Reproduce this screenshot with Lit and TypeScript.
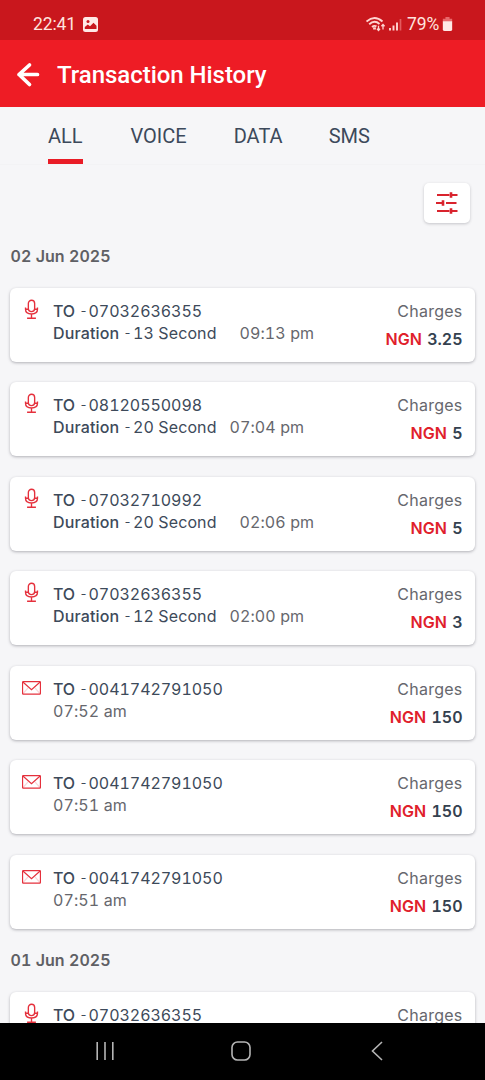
import { LitElement, html, css, svg } from "lit";
import { customElement, property } from "lit/decorators.js";

interface Entry {
  kind: "voice" | "sms";
  to: string;
  duration?: string;
  time: string;
  amount: string;
  wide?: boolean;
}

const days: { date: string; entries: Entry[] }[] = [
  {
    date: "02 Jun 2025",
    entries: [
      { kind: "voice", to: "07032636355", duration: "13 Second", time: "09:13 pm", amount: "3.25", wide: true },
      { kind: "voice", to: "08120550098", duration: "20 Second", time: "07:04 pm", amount: "5" },
      { kind: "voice", to: "07032710992", duration: "20 Second", time: "02:06 pm", amount: "5", wide: true },
      { kind: "voice", to: "07032636355", duration: "12 Second", time: "02:00 pm", amount: "3" },
      { kind: "sms", to: "0041742791050", time: "07:52 am", amount: "150" },
      { kind: "sms", to: "0041742791050", time: "07:51 am", amount: "150" },
      { kind: "sms", to: "0041742791050", time: "07:51 am", amount: "150" },
    ],
  },
  {
    date: "01 Jun 2025",
    entries: [{ kind: "voice", to: "07032636355", time: "", amount: "" }],
  },
];

const mic = svg`<rect x="7" y="1.200" width="6" height="10.800" rx="3"/><path d="M4.300 8v1.800c0 2.800 2.400 4.500 5.700 4.500s5.700-1.700 5.700-4.500V8M10 14.300v4M5.800 18.300h8.400M4.300 9.800H7M13 9.800h2.700"/>`;
const mail = svg`<rect x="1.500" y="3.500" width="17" height="11.800" rx=".6"/><path d="M1.800 3.800 10 11.200l8.200-7.400"/><path d="M1.800 15 6.700 9.500M18.200 15l-4.900-5.500" stroke-opacity=".2"/>`;

@customElement("transaction-card")
class TransactionCard extends LitElement {
  @property({ attribute: false }) entry!: Entry;

  static styles = css`
    :host { display: block; }
    .card {
      box-sizing: border-box; height: 74px; display: flex; background: #fff; border-radius: 6px;
      padding: 12px 12.5px 0 11px; box-shadow: 0 1px 3px rgba(40, 40, 55, 0.34);
      font: 16px/22px Inter, sans-serif; font-variant-numeric: tabular-nums; color: #3d4a5a; white-space: nowrap;
    }
    .icon { width: 21px; height: 21px; flex: none; fill: none; stroke: #e5303c; stroke-width: 1.3; }
    .voice { margin-top: -1px; }
    .sms { stroke-width: 1.1; }
    .info { margin-left: 11px; flex: 1; }
    .line { display: flex; height: 22px; }
    .to { width: 26.5px; font-weight: 500; letter-spacing: -0.1px; }
    .dash { width: 9px; font-size: 12.5px; }
    .number { letter-spacing: -0.05px; }
    .label { width: 70.5px; font-weight: 500; letter-spacing: 0.15px; }
    .dash.second { width: 9.5px; }
    .seconds { width: 96.5px; letter-spacing: 0.1px; }
    .seconds.wide { width: 106.5px; }
    .time { color: #66676d; letter-spacing: 0.1px; }
    .side { text-align: right; color: #66676d; }
    .charges { letter-spacing: 0.25px; }
    .amount { margin-top: 6px; font-weight: 600; color: #34414f; word-spacing: 1px; }
    .currency { color: #e0202b; }
  `;

  render() {
    const e = this.entry;
    return html`<div class="card">
      <svg class="icon ${e.kind}" viewBox="0 0 20 20">${e.kind === "voice" ? mic : mail}</svg>
      <div class="info">
        <div class="line"><span class="to">TO</span><span class="dash">-</span><span class="number">${e.to}</span></div>
        ${e.time
          ? html`<div class="line">
              ${e.duration
                ? html`<span class="label">Duration</span><span class="dash second">-</span><span class="seconds ${e.wide ? "wide" : ""}">${e.duration}</span>`
                : ""}
              <span class="time">${e.time}</span>
            </div>`
          : ""}
      </div>
      <div class="side">
        <div class="charges">Charges</div>
        ${e.amount ? html`<div class="amount"><span class="currency">NGN</span> ${e.amount}</div>` : ""}
      </div>
    </div>`;
  }
}

@customElement("app-root")
class AppRoot extends LitElement {
  static styles = css`
    :host {
      display: flex; flex-direction: column; height: 1080px; width: 485px; overflow: hidden;
      background: #f6f6f8; font-family: Roboto, sans-serif;
    }
    .status {
      box-sizing: border-box; height: 40px; flex: none; padding: 8px 32px 0 33px; display: flex; align-items: center;
      background: #c9171d; color: #ffe3df; font-size: 17.5px;
    }
    .clock { width: 50px; letter-spacing: -0.1px; }
    .picture { width: 15px; height: 15px; }
    .signals { margin-left: auto; width: 38px; height: 18px; }
    .percent { margin-left: 3px; width: 35px; letter-spacing: -0.1px; }
    .battery { width: 11px; height: 14px; }
    .header {
      box-sizing: border-box; height: 67px; flex: none; display: flex; align-items: center; padding: 2px 0 0 16px;
      background: #ee1c25; color: #fff;
    }
    .back { width: 24px; height: 26px; }
    .title { margin-left: 17px; font-size: 24px; font-weight: 500; letter-spacing: -0.04px; white-space: nowrap; }
    .tabs {
      box-sizing: border-box; height: 58px; flex: none; display: flex; padding: 17px 0 0 48px; gap: 48px;
      border-bottom: 1px solid #f3f3f5; color: #3c495b; font-size: 20px; line-height: 24px;
    }
    .tab { height: 40px; box-sizing: border-box; }
    .tab.active { border-bottom: 5px solid #e91c26; width: 34.5px; }
    .tab.data { margin-left: -1px; }
    .tab.last { margin-left: -2px; }
    .main { flex: 1; min-height: 0; overflow: hidden; padding: 0 10px; }
    .tools { display: flex; justify-content: flex-end; padding: 18px 5px 0 0; }
    .filter {
      width: 46px; height: 40px; background: #fff; border-radius: 5px; display: flex; align-items: center;
      justify-content: center; box-shadow: 0 1px 3px rgba(40, 40, 55, 0.24);
    }
    .sliders { width: 24px; height: 24px; fill: none; stroke: #d9232d; stroke-width: 2; }
    .date {
      font: 600 16px/20px Inter, sans-serif; font-variant-numeric: tabular-nums; color: #5f6065;
      padding: 23px 0 0 0.5px; letter-spacing: 0.05px;
    }
    .list { display: flex; flex-direction: column; gap: 20.5px; padding-top: 21.7px; }
    .day + .day .date { padding-top: 21.7px; }
    .nav { height: 57px; flex: none; background: #000; display: flex; justify-content: space-between; align-items: center; padding: 0 98px 2px 94px; box-sizing: border-box; }
    .key { width: 22px; height: 22px; fill: none; stroke: #b5b5b5; stroke-width: 1.6; }
  `;

  render() {
    return html`
      <div class="status">
        <span class="clock">22:41</span>
        <svg class="picture" viewBox="0 0 15 15"><rect width="15" height="15" rx="2.5" fill="#ffe9e6"/><circle cx="5" cy="4.5" r="1.5" fill="#c9171d"/><path d="M1.8 12V10l3-2.5 2.2 1.8 3.5-3.5 3 3V12z" fill="#c9171d"/></svg>
        <svg class="signals" viewBox="0 0 38 18" fill="none" stroke="#ffd5d1" stroke-width="1.9">
          <path d="M.5 6.500q8-7 16 0M3.200 9.300q5.300-4.800 10.300-.3M6 12q2.200-1.900 4.500-.6"/>
          <path d="M8.500 12.300v2.200" stroke-width="2.800"/>
          <path d="M12.500 10.800v4.700M11 13.800l1.500 1.700 1.500-1.700M17 14.500V9.500M15.400 11.300l1.600-1.800 1.600 1.800" stroke-width="1.300"/>
          <path d="M24 13v2.500M27.500 10.500v5M31 7.500v8" stroke-width="1.900"/>
          <path d="M34.500 4v11.500" stroke-width="1.700" stroke="#e35b5f"/>
        </svg>
        <span class="percent">79%</span>
        <svg class="battery" viewBox="0 0 11 15"><path d="M3.300 0h4.400v2H10.500v3H.5V2h2.800z" fill="#e8686b"/><path d="M.5 4.500h10V13q0 2-2 2h-6q-2 0-2-2z" fill="#ffe9e6"/></svg>
      </div>
      <div class="header">
        <svg class="back" viewBox="0 0 24 26" fill="none" stroke="#fff" stroke-width="3.700" stroke-linecap="round" stroke-linejoin="round"><path d="M13.500 3 3 12.500l10.500 10M3 12.500h18.500"/></svg>
        <span class="title">Transaction History</span>
      </div>
      <div class="tabs">
        <span class="tab active">ALL</span><span class="tab">VOICE</span><span class="tab data">DATA</span><span class="tab last">SMS</span>
      </div>
      <div class="main">
        <div class="tools">
          <div class="filter">
            <svg class="sliders" viewBox="0 0 24 24"><path d="M2 4h12.500M17 4h5.500M1 12h6M11 12h10.500M2 20h12.500M17 20h5.500"/><path d="M16 1.200v5.600M8 9.200v5.600M16 17.200v5.600" stroke-width="2.600"/></svg>
          </div>
        </div>
        ${days.map(
          (d) => html`<div class="day">
            <div class="date">${d.date}</div>
            <div class="list">${d.entries.map((e) => html`<transaction-card .entry=${e}></transaction-card>`)}</div>
          </div>`
        )}
      </div>
      <div class="nav">
        <svg class="key" viewBox="0 0 22 22"><path d="M3.200 2v18M11 2v18M18.800 2v18"/></svg>
        <svg class="key" viewBox="0 0 22 22"><rect x="2" y="2" width="18" height="18" rx="5.500"/></svg>
        <svg class="key" viewBox="0 0 22 22"><path d="M17 2 7.500 11l9.500 9"/></svg>
      </div>
    `;
  }
}
